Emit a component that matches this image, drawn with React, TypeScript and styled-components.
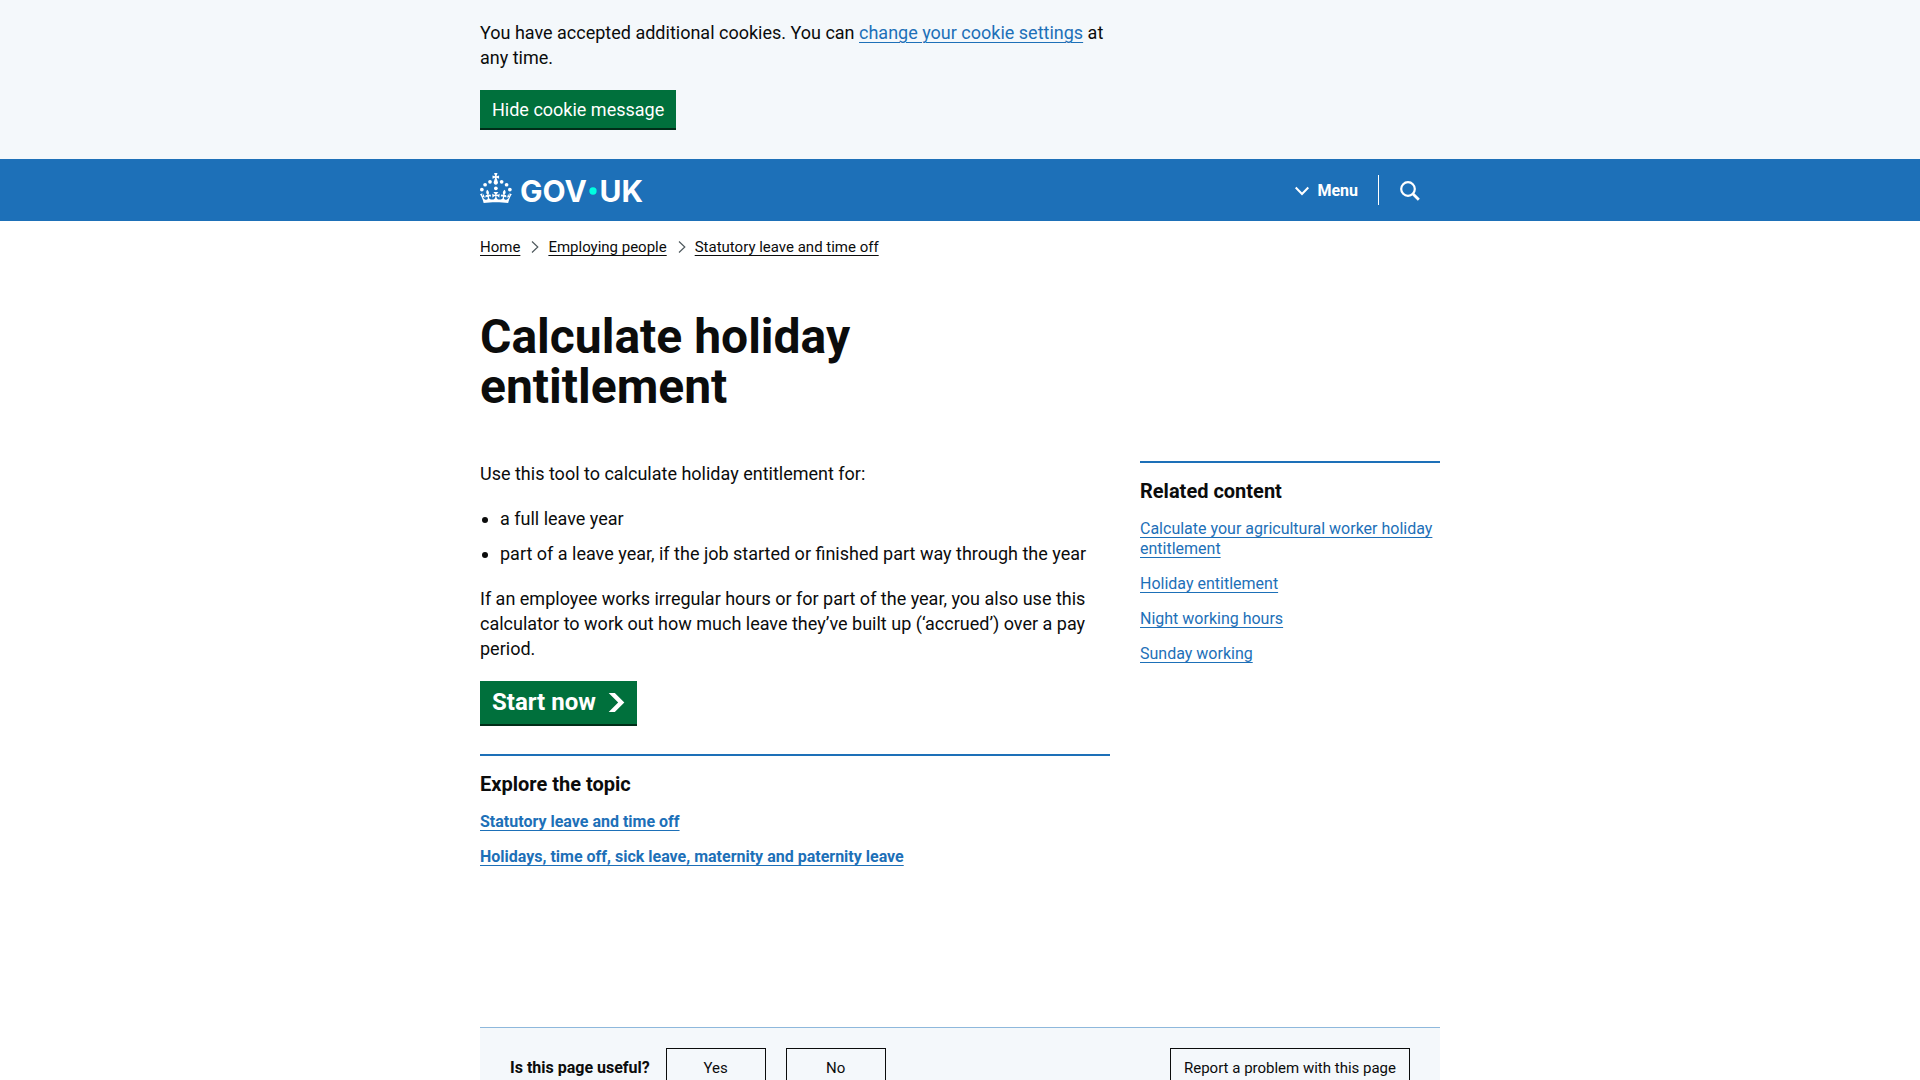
import React from 'react';
import styled, { createGlobalStyle, css } from 'styled-components';

const colour = {
  text: '#0b0c0c',
  blue: '#1d70b8',
  tint: '#f4f8fb',
  green: '#00703c',
  greenShadow: '#002d18',
  border: '#8eb8dc',
  white: '#ffffff',
  accent: '#00ffe0',
};

const GlobalStyle = createGlobalStyle`
  *, *::before, *::after { box-sizing: border-box; }
  html { background: ${colour.white}; }
  body {
    margin: 0;
    color: ${colour.text};
    font-family: Roboto, "Liberation Sans", Arial, sans-serif;
    font-size: 18px;
    line-height: 25px;
  }
  button { font-family: inherit; cursor: pointer; }
`;

const Container = styled.div`
  max-width: 960px;
  margin: 0 auto;
`;

const Columns = styled.div`
  display: grid;
  grid-template-columns: minmax(0, 21fr) minmax(0, 10fr);
  column-gap: 30px;
  align-items: start;
`;

const linkLine = css`
  text-decoration: underline;
  text-decoration-thickness: 1px;
  text-underline-offset: 3px;
`;

const Link = styled.a<{ $plain?: boolean }>`
  color: ${(p) => (p.$plain ? colour.text : colour.blue)};
  ${linkLine}
`;

const CookieBanner = styled.section`
  padding: 20px 0 29px;
  background: ${colour.tint};
`;

const Paragraph = styled.p`
  margin: 0 0 20px;
`;

const greenButton = css`
  border: 0;
  border-radius: 0;
  color: ${colour.white};
  background: ${colour.green};
  box-shadow: 0 2px 0 ${colour.greenShadow};
`;

const HideButton = styled.button`
  ${greenButton}
  display: block;
  height: 38px;
  margin-bottom: 2px;
  padding: 0 12px;
  font-size: 18px;
  line-height: 25px;
`;

const Header = styled.header`
  color: ${colour.white};
  background: ${colour.blue};
`;

const HeaderRow = styled(Container)`
  display: flex;
  align-items: center;
  justify-content: space-between;
  height: 62px;
`;

const LogoLink = styled.a`
  display: block;
  height: 34px;
  color: inherit;
`;

const LogoSvg = styled.svg`
  display: block;
  overflow: visible;
`;

const LogoText = styled.text`
  font-family: Inter, "Liberation Sans", Arial, sans-serif;
  font-size: 60px;
  font-weight: 700;
  fill: ${colour.white};
`;

const HeaderNav = styled.nav`
  display: flex;
  align-items: center;
`;

const HeaderButton = styled.button`
  display: flex;
  align-items: center;
  gap: 8px;
  height: 30px;
  padding: 2px 20px 0;
  border: 0;
  color: inherit;
  background: transparent;
  font-size: 16px;
  font-weight: 700;
  line-height: 20px;

  & + & {
    border-left: 1px solid ${colour.white};
    padding-left: 21px;
  }
`;

const Breadcrumbs = styled.ol`
  display: flex;
  margin: 0;
  padding: 16px 0 0;
  list-style: none;
  font-size: 15px;
  line-height: 20px;
`;

const Crumb = styled.li`
  display: flex;
  align-items: center;

  & > svg { margin: 0 9px 0 11px; }
`;

const Title = styled.h1`
  max-width: 480px;
  margin: 55px 0 49px;
  font-size: 48px;
  font-weight: 700;
  line-height: 50px;
`;

const BulletList = styled.ul`
  display: grid;
  gap: 10px;
  margin: 0 0 20px;
  padding-left: 20px;
`;

const StartButton = styled.a`
  ${greenButton}
  display: inline-flex;
  align-items: center;
  gap: 12px;
  height: 43px;
  padding: 0 12px;
  font-size: 24px;
  font-weight: 700;
  text-decoration: none;
  vertical-align: top;
`;

const TopicSection = styled.section<{ $spaced?: boolean }>`
  margin-top: ${(p) => (p.$spaced ? '30px' : '0')};
  padding-top: 16px;
  border-top: 2px solid ${colour.blue};
`;

const TopicHeading = styled.h2`
  margin: 0 0 15px;
  font-size: 20px;
  font-weight: 700;
  line-height: 25px;
`;

const TopicList = styled.ul<{ $bold?: boolean }>`
  display: grid;
  gap: 15px;
  margin: 0;
  padding: 0;
  list-style: none;
  font-size: 16px;
  font-weight: ${(p) => (p.$bold ? 700 : 400)};
  line-height: 20px;
`;

const Feedback = styled.section`
  display: flex;
  align-items: center;
  gap: 16px;
  margin-top: 160px;
  padding: 20px 30px;
  border-top: 1px solid ${colour.border};
  background: ${colour.tint};
`;

const FeedbackLabel = styled.h2`
  margin: 0;
  font-size: 16px;
  font-weight: 700;
  line-height: 20px;
`;

const Answers = styled.div`
  display: flex;
  gap: 20px;
`;

const FeedbackButton = styled.button<{ $wide?: boolean }>`
  width: ${(p) => (p.$wide ? '240px' : '100px')};
  height: 40px;
  margin-left: ${(p) => (p.$wide ? 'auto' : '0')};
  padding: 0;
  border: 1px solid ${colour.text};
  border-radius: 0;
  color: ${colour.text};
  background: ${colour.tint};
  box-shadow: 0 2px 0 ${colour.text};
  font-size: 15px;
  line-height: 20px;
`;

const crumbs = ['Home', 'Employing people', 'Statutory leave and time off'];

const related = [
  'Calculate your agricultural worker holiday entitlement',
  'Holiday entitlement',
  'Night working hours',
  'Sunday working',
];

const topics = [
  'Statutory leave and time off',
  'Holidays, time off, sick leave, maternity and paternity leave',
];

const crownDots = [
  [20, 17.6],
  [10.2, 23.5],
  [3.7, 33.2],
  [31.7, 30.6],
  [43.3, 17.6],
  [53.2, 23.5],
  [59.7, 33.2],
];

function Logo() {
  return (
    <LogoSvg width="164" height="30" viewBox="0 0 328 60" role="img" aria-label="GOV.UK">
      <g fill="#fff">
        {crownDots.map(([cx, cy]) => (
          <circle key={`${cx}-${cy}`} cx={cx} cy={cy} r="3.7" />
        ))}
        <path d="M33.1,9.8c.2-.1.3-.3.5-.5l4.6,2.4v-6.8l-4.6,1.5c-.1-.2-.3-.3-.5-.5l1.9-5.9h-6.8l1.9,5.9c-.2.1-.3.3-.5.5l-4.6-1.5v6.8l4.6-2.4c.1.2.3.3.5.5l-2.6,8c-.9,2.8,1.2,5.7,4.1,5.7h0c3,0,5.1-2.9,4.1-5.7l-2.6-8ZM37,37.9s-3.4,3.8-4.1,6.1c2.2,0,4.2-.5,6.4-2.8l-.7,8.5c-2-2.8-4.4-4.1-5.7-3.8.1,3.1.5,6.7,5.8,7.2,3.7.3,6.7-1.5,7-3.8.4-2.6-2-4.3-3.7-1.6-1.4-4.5,2.4-6.1,4.9-3.2-1.9-4.5-1.8-7.7,2.4-10.9,3,4,2.6,7.3-1.2,11.1,2.4-1.3,6.2,0,4,4.6-1.2-2.8-3.7-2.2-4.2.2-.3,1.7.7,3.7,3,4.2,1.9.3,4.7-.9,7-5.9-1.3,0-2.4.7-3.9,1.7l2.4-8c.6,2.3,1.4,3.7,2.2,4.5.6-1.6.5-2.8,0-5.3l5,1.8c-2.6,3.6-5.2,8.7-7.3,17.5-7.4-1.1-15.7-1.7-24.5-1.7h0c-8.8,0-17.1.6-24.5,1.7-2.1-8.9-4.7-13.9-7.3-17.5l5-1.8c-.5,2.5-.6,3.7,0,5.3.8-.8,1.6-2.3,2.2-4.5l2.4,8c-1.5-1-2.6-1.7-3.9-1.7,2.3,5,5.2,6.2,7,5.9,2.3-.4,3.3-2.4,3-4.2-.5-2.4-3-3.1-4.2-.2-2.2-4.6,1.6-6,4-4.6-3.7-3.7-4.2-7.1-1.2-11.1,4.2,3.2,4.3,6.4,2.4,10.9,2.5-2.8,6.3-1.3,4.9,3.2-1.8-2.7-4.1-1-3.7,1.6.3,2.3,3.3,4.1,7,3.8,5.4-.5,5.7-4.2,5.8-7.2-1.3-.2-3.7,1-5.7,3.8l-.7-8.5c2.2,2.3,4.2,2.7,6.4,2.8-.7-2.3-4.1-6.1-4.1-6.1h10.6,0Z" />
      </g>
      <LogoText x="80" y="58">GOV</LogoText>
      <circle cx="226" cy="36" r="7.3" fill={colour.accent} />
      <LogoText x="239" y="58">UK</LogoText>
    </LogoSvg>
  );
}

function MenuChevron() {
  return (
    <svg width="14" height="10" viewBox="0 0 14 10" fill="none" stroke="currentColor" strokeWidth="2" aria-hidden="true">
      <path d="M0.7 1.5 7 8l6.3-6.5" />
    </svg>
  );
}

function SearchIcon() {
  return (
    <svg width="20" height="20" viewBox="0 0 20 20" fill="none" stroke="currentColor" aria-hidden="true">
      <circle cx="8" cy="8" r="6.8" strokeWidth="2.2" />
      <path d="M12.8 12.8 18.8 18.8" strokeWidth="2.8" />
    </svg>
  );
}

function CrumbChevron() {
  return (
    <svg width="8" height="12" viewBox="0 0 8 12" fill="none" stroke="#505a5f" strokeWidth="1.2" aria-hidden="true">
      <path d="M1 0.5 6.8 6 1 11.5" />
    </svg>
  );
}

function StartArrow() {
  return (
    <svg width="17" height="19" viewBox="0 0 33 40" fill="currentColor" aria-hidden="true">
      <path d="M0 0h13l20 20-20 20H0l20-20z" />
    </svg>
  );
}

export default function App() {
  return (
    <>
      <GlobalStyle />
      <CookieBanner aria-label="Cookies on GOV.UK">
        <Container>
          <Columns>
            <Paragraph>
              You have accepted additional cookies. You can <Link href="#cookies">change your cookie settings</Link> at
              any time.
            </Paragraph>
          </Columns>
          <HideButton type="button">Hide cookie message</HideButton>
        </Container>
      </CookieBanner>

      <Header>
        <HeaderRow>
          <LogoLink href="#home">
            <Logo />
          </LogoLink>
          <HeaderNav aria-label="Navigation menu">
            <HeaderButton type="button">
              <MenuChevron />
              Menu
            </HeaderButton>
            <HeaderButton type="button" aria-label="Search GOV.UK">
              <SearchIcon />
            </HeaderButton>
          </HeaderNav>
        </HeaderRow>
      </Header>

      <Container>
        <nav aria-label="Breadcrumb">
          <Breadcrumbs>
            {crumbs.map((name, i) => (
              <Crumb key={name}>
                {i > 0 && <CrumbChevron />}
                <Link $plain href="#crumb">{name}</Link>
              </Crumb>
            ))}
          </Breadcrumbs>
        </nav>

        <main>
          <Title>Calculate holiday entitlement</Title>
          <Columns>
            <div>
              <Paragraph>Use this tool to calculate holiday entitlement for:</Paragraph>
              <BulletList>
                <li>a full leave year</li>
                <li>part of a leave year, if the job started or finished part way through the year</li>
              </BulletList>
              <Paragraph>
                If an employee works irregular hours or for part of the year, you also use this calculator to work out
                how much leave they’ve built up (‘accrued’) over a pay period.
              </Paragraph>
              <StartButton href="#start" role="button">
                Start now
                <StartArrow />
              </StartButton>
              <TopicSection $spaced>
                <TopicHeading>Explore the topic</TopicHeading>
                <TopicList $bold>
                  {topics.map((name) => (
                    <li key={name}><Link href="#topic">{name}</Link></li>
                  ))}
                </TopicList>
              </TopicSection>
            </div>
            <TopicSection as="aside">
              <TopicHeading>Related content</TopicHeading>
              <TopicList>
                {related.map((name) => (
                  <li key={name}><Link href="#related">{name}</Link></li>
                ))}
              </TopicList>
            </TopicSection>
          </Columns>
        </main>

        <Feedback aria-label="Feedback">
          <FeedbackLabel>Is this page useful?</FeedbackLabel>
          <Answers>
            <FeedbackButton type="button">Yes</FeedbackButton>
            <FeedbackButton type="button">No</FeedbackButton>
          </Answers>
          <FeedbackButton type="button" $wide>Report a problem with this page</FeedbackButton>
        </Feedback>
      </Container>
    </>
  );
}
